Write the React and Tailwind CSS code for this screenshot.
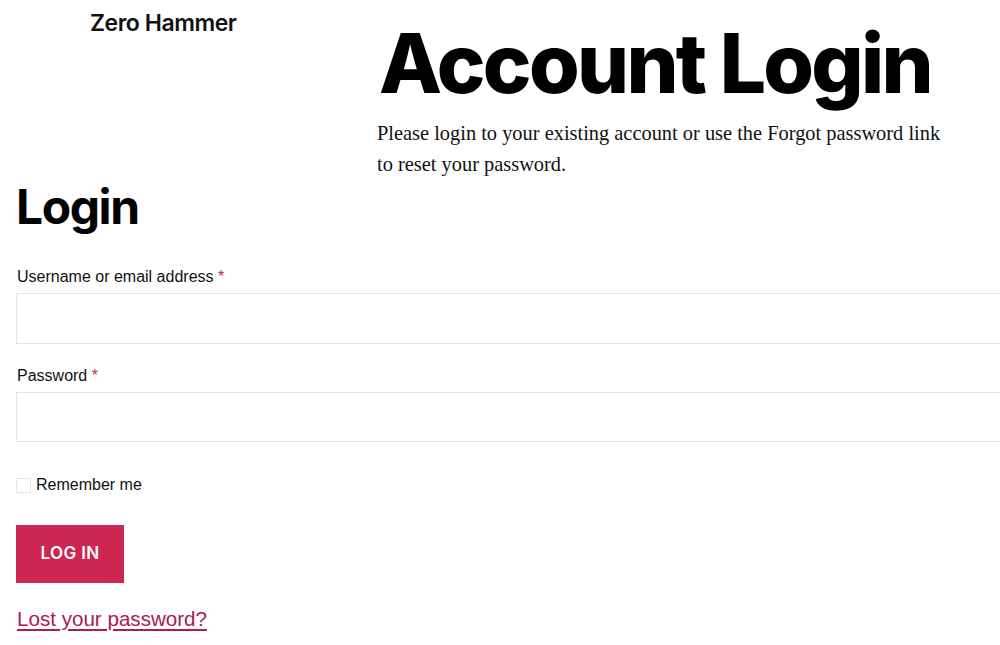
import React from "react";

const inter = { fontFamily: "Inter, 'Noto Sans', sans-serif" };

export default function App() {
  return (
    <div className="min-h-screen w-[1000px] overflow-hidden bg-white text-black">
      <header className="flex">
        <div className="w-[377px] shrink-0 pl-[90px] pt-[8px]">
          <div
            className="text-[23px] font-semibold leading-[30px] tracking-[-0.02em] text-[#111]"
            style={inter}
          >
            Zero Hammer
          </div>
        </div>
        <div className="pt-[23px]">
          <h1
            className="ml-[2px] text-[82px] font-extrabold leading-none tracking-[-0.033em]"
            style={inter}
          >
            Account Login
          </h1>
          <p className="mt-[13px] w-[578px] font-['Liberation_Serif',serif] text-[20.4px] leading-[31px] text-[#111]">
            Please login to your existing account or use the Forgot password link
            to reset your password.
          </p>
        </div>
      </header>

      <main className="px-[16px]">
        <h2
          className="mt-[3px] text-[48px] font-bold leading-none tracking-[-0.03em]"
          style={inter}
        >
          Login
        </h2>

        <form className="mt-[36px] font-['Liberation_Sans',Arial,sans-serif]">
          <label className="ml-[1px] block text-[16px] leading-[20px] text-[#111]">
            Username or email address <span className="text-[#cd2653]">*</span>
          </label>
          <input
            type="text"
            className="mt-[6px] block h-[51px] w-[1000px] border border-[#e4e4e4] bg-white outline-none"
          />

          <label className="ml-[1px] mt-[22px] block text-[16px] leading-[20px] text-[#111]">
            Password <span className="text-[#cd2653]">*</span>
          </label>
          <input
            type="password"
            className="mt-[6px] block h-[50px] w-[1000px] border border-[#e4e4e4] bg-white outline-none"
          />

          <label className="mt-[33px] flex items-center gap-[5px] text-[16px] leading-[20px] text-[#111]">
            <span className="block h-[15px] w-[15px] border border-[#e4e4e4] bg-white" />
            Remember me
          </label>

          <button
            type="button"
            className="mt-[30px] block h-[58px] w-[108px] bg-[#cd2653] text-[17px] font-semibold tracking-[0.02em] text-white"
            style={inter}
          >
            LOG IN
          </button>

          <a
            href="#"
            className="ml-[1px] mt-[24px] inline-block text-[20.6px] leading-[24px] text-[#a8204b] underline underline-offset-[3px]"
          >
            Lost your password?
          </a>
        </form>
      </main>
    </div>
  );
}
